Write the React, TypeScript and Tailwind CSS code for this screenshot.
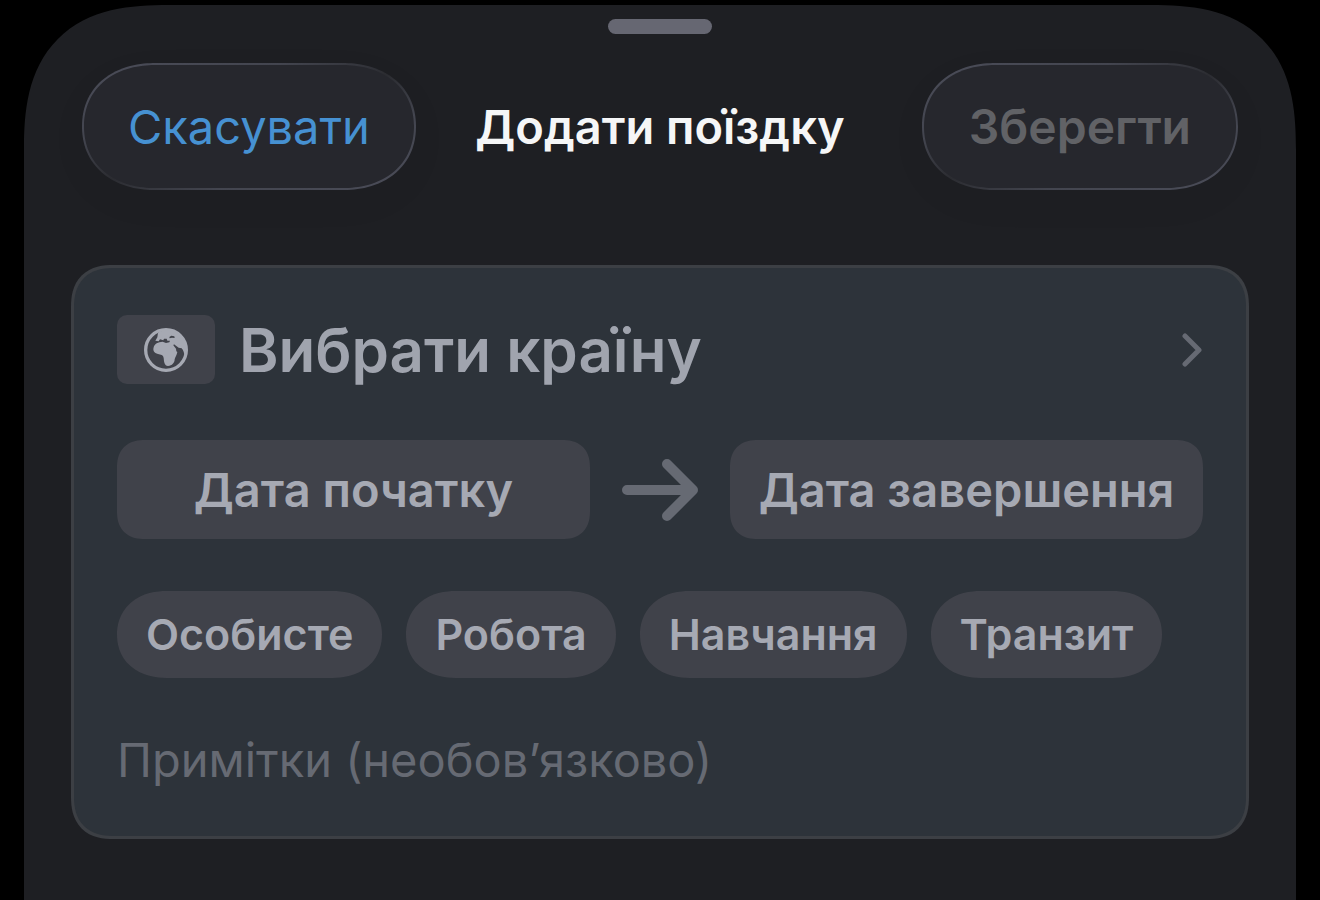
import React from "react";

const tripTypes = ["Особисте", "Робота", "Навчання", "Транзит"];

const glass =
  "h-[127px] rounded-[74px/64px] border-2 border-transparent leading-none whitespace-nowrap [corner-shape:superellipse(1.12)] [background:linear-gradient(#26272d,#26272d)_padding-box,linear-gradient(to_bottom_right,#4b4d59,#43454f_30%,#2b2c31_50%,#43454f_70%,#4b4d59)_border-box] shadow-[0_12px_40px_rgba(0,0,0,0.04)]";

const dateField =
  "h-[99px] min-w-0 flex-1 rounded-[28px] bg-[#40424a] text-center text-[47px] leading-none font-semibold whitespace-nowrap text-[#a6a9b3] [corner-shape:superellipse(1.25)]";

function GlobeIcon() {
  return (
    <svg viewBox="0 0 132 132" className="size-[44px]" aria-hidden="true">
      <circle cx="66" cy="66" r="61" fill="none" stroke="currentColor" strokeWidth="10" />
      <path
        fill="currentColor"
        d="M42 14C60 4 84 4 102 16C122 30 130 50 128 72L122 84C120 74 118 66 113 61L104 59L90 49L88 52L96 62L97 70L100 72C98 82 94 86 92 94C92 104 84 114 72 114C61 114 60 100 59 90C58 80 50 80 42 78C30 75 26 68 29 58C32 46 42 42 56 41L66 45L76 43L78 38L70 38L68 32L60 32L58 37L48 34L44 40L34 38L40 28Z"
      />
      <path fill="#40424a" d="M76 27L82 23L91 25L92 30L84 29L77 31Z" />
    </svg>
  );
}

function ArrowIcon() {
  return (
    <svg
      viewBox="0 0 76 64"
      className="h-[64px] w-[76px] shrink-0 text-[#666a73]"
      fill="none"
      stroke="currentColor"
      strokeWidth="10"
      strokeLinecap="round"
      strokeLinejoin="round"
      aria-hidden="true"
    >
      <path d="M5 32H70M45 6L71 32L45 58" />
    </svg>
  );
}

function ChevronIcon() {
  return (
    <svg
      viewBox="0 0 22 34"
      className="h-[34px] w-[22px] shrink-0 text-[#666a73]"
      fill="none"
      stroke="currentColor"
      strokeWidth="5"
      strokeLinecap="round"
      strokeLinejoin="round"
      aria-hidden="true"
    >
      <path d="M4 3L18 17L4 31" />
    </svg>
  );
}

export default function App() {
  return (
    <div className="min-h-screen bg-black px-6 pt-[5px] font-['Inter','Liberation_Sans',sans-serif]">
      <main className="flex min-h-[calc(100vh-5px)] flex-col rounded-t-[145px] bg-[#1e1f23] px-[47px] pt-[14px] pb-[61px] [corner-shape:superellipse(1.38)]">
        <div className="h-[15px] w-[104px] self-center rounded-full bg-[#666772]" />

        <header className="mt-[29px] grid grid-cols-[1fr_auto_1fr] items-center px-[11px]">
          <button type="button" className={`${glass} justify-self-start px-[44px] text-[47px] text-[#4691d2]`}>
            Скасувати
          </button>
          <h1 className="text-[47px] leading-none font-semibold whitespace-nowrap text-[#f5f6f7]">
            Додати поїздку
          </h1>
          <button
            type="button"
            disabled
            className={`${glass} justify-self-end px-[45px] text-[48px] font-semibold text-[#616266]`}
          >
            Зберегти
          </button>
        </header>

        <form className="mt-[75px] rounded-[42px] border-[3px] border-[#3c3f44] bg-[#2d333a] px-[43px] pt-[47px] pb-[46px] [corner-shape:superellipse(1.25)]">
          <button type="button" className="flex h-[69px] w-full items-center text-left">
            <span className="flex h-[69px] w-[98px] shrink-0 items-center justify-center rounded-[10px] bg-[#40424a] text-[#a6a9b3]">
              <GlobeIcon />
            </span>
            <span className="ml-6 flex-1 text-[60px] leading-none font-semibold text-[#a0a4ae]">
              Вибрати країну
            </span>
            <ChevronIcon />
          </button>

          <div className="mt-14 flex items-center gap-8">
            <button type="button" className={dateField}>
              Дата початку
            </button>
            <ArrowIcon />
            <button type="button" className={dateField}>
              Дата завершення
            </button>
          </div>

          <div className="mt-[52px] flex gap-6">
            {tripTypes.map((type) => (
              <button
                key={type}
                type="button"
                className="h-[87px] rounded-[50px/44px] bg-[#40424a] px-[29px] text-[43px] leading-none font-semibold whitespace-nowrap text-[#a6a9b3] [corner-shape:superellipse(1.12)]"
              >
                {type}
              </button>
            ))}
          </div>

          <input
            type="text"
            aria-label="Примітки"
            placeholder="Примітки (необов’язково)"
            className="mt-[52px] block h-[60px] w-full bg-transparent text-[47px] text-[#a6a9b3] outline-none placeholder:text-[#666a73]"
          />
        </form>
      </main>
    </div>
  );
}
